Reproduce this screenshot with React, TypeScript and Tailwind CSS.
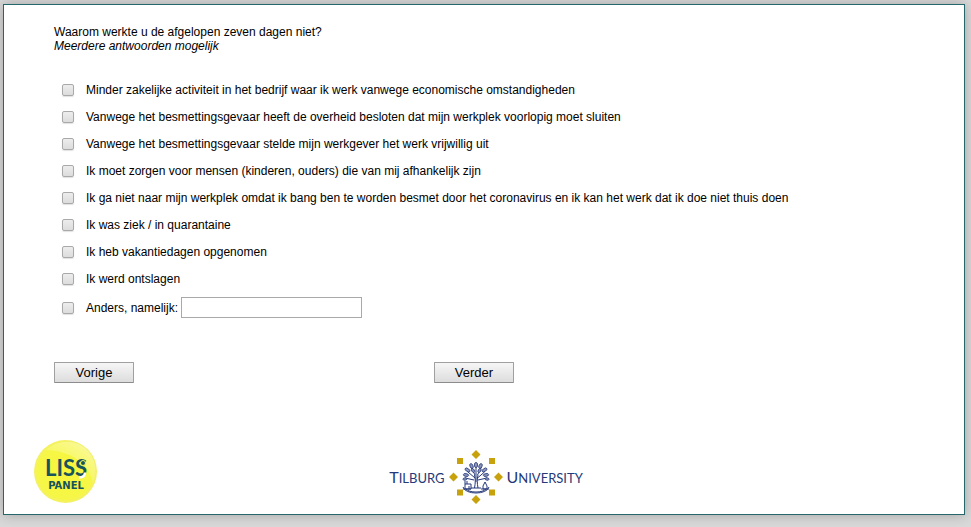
import React from "react";

const reasons: string[] = [
  "Minder zakelijke activiteit in het bedrijf waar ik werk vanwege economische omstandigheden",
  "Vanwege het besmettingsgevaar heeft de overheid besloten dat mijn werkplek voorlopig moet sluiten",
  "Vanwege het besmettingsgevaar stelde mijn werkgever het werk vrijwillig uit",
  "Ik moet zorgen voor mensen (kinderen, ouders) die van mij afhankelijk zijn",
  "Ik ga niet naar mijn werkplek omdat ik bang ben te worden besmet door het coronavirus en ik kan het werk dat ik doe niet thuis doen",
  "Ik was ziek / in quarantaine",
  "Ik heb vakantiedagen opgenomen",
  "Ik werd ontslagen",
];

function Checkbox({ id }: { id: string }) {
  return (
    <input
      id={id}
      type="checkbox"
      className="size-3 shrink-0 appearance-none rounded-[2px] border border-[#a9a9a9] bg-linear-to-b from-[#ededed] to-[#dcdcdc] shadow-[0_1px_1px_rgba(0,0,0,0.12)] checked:from-[#777] checked:to-[#555]"
    />
  );
}

function NavButton({ children }: { children: React.ReactNode }) {
  return (
    <button
      type="button"
      className="h-[21px] w-20 rounded-[1px] border border-[#a0a0a0] border-b-[#8c8c8c] bg-linear-to-b from-[#f6f6f6] to-[#dddddd] text-[13px] leading-[19px] text-black"
    >
      {children}
    </button>
  );
}

function LissLogo() {
  return (
    <svg viewBox="0 0 64 64" className="size-16" role="img" aria-label="LISS Panel">
      <defs>
        <radialGradient id="ball" cx="0.5" cy="0.5" r="0.5">
          <stop offset="0" stopColor="#f7f73a" />
          <stop offset="0.88" stopColor="#f6f648" />
          <stop offset="1" stopColor="#f3f06a" />
        </radialGradient>
        <linearGradient id="shine" x1="0.9" y1="0" x2="0.3" y2="0.8">
          <stop offset="0" stopColor="#fff" stopOpacity="0.45" />
          <stop offset="1" stopColor="#fff" stopOpacity="0.05" />
        </linearGradient>
      </defs>
      <circle cx="31.5" cy="31.5" r="31.5" fill="url(#ball)" />
      <path d="M12 10C24 -1 42 -1 53 10C61 18 64 30 59 43C55 24 38 11 12 10Z" fill="url(#shine)" />
      <text
        x="32"
        y="36"
        textAnchor="middle"
        className="font-['Lato',sans-serif] text-[22px] font-bold"
        fill="#17545c"
      >
        LISS
      </text>
      <circle cx="49" cy="23" r="2.500" fill="#17545c" stroke="#f7f75a" strokeWidth="1" />
      <path d="M45 37.500c4 0 6-2 6-5" fill="none" stroke="#fff" strokeWidth="2.500" />
      <text
        x="32"
        y="49"
        textAnchor="middle"
        className="font-['DejaVu_Sans',sans-serif] text-[10px] font-bold"
        fill="#17545c"
      >
        PANEL
      </text>
    </svg>
  );
}

function Emblem() {
  return (
    <svg viewBox="0 0 54 54" className="size-[54px]" aria-hidden="true">
      <g fill="#c8a20c">
        <path d="M27 0l4.500 4.500l-4.500 4.500l-4.500-4.500zM27 45l4.500 4.500l-4.500 4.500l-4.500-4.500zM4.500 22.500l4.500 4.500l-4.500 4.500l-4.500-4.500zM49.500 22.500l4.500 4.500l-4.500 4.500l-4.500-4.500z" />
        <path d="M8 8h6v6H8zM40 8h6v6h-6zM8 39.500h6v6H8zM40 39.500h6v6h-6z" />
      </g>
      <g fill="none" stroke="#26397a" strokeWidth="1">
        <path d="M25.500 38c1-5 1-9 0-13M29 38c-1-5-1-9 0-13M27 32V15M26 28l-7-6M28.500 28l7-6M26 25l-4-8M28.500 25l4-8M25 30l-9-2M29 30l9-2M22 38h10" />
        <path d="M16 31v8h6v-5h-6M18 31v3M20 36v3M34 39v-3l2-4l2 4v3zM32 39h8M14 39h8" />
        <path d="M14 37c2 8 24 8 26 0M17 39c3 4 17 4 20 0" />
      </g>
      <g fill="#8d98bd" stroke="#26397a" strokeWidth="0.8">
        <ellipse cx="27" cy="15" rx="1.600" ry="2.600" />
        <ellipse cx="22.500" cy="16" rx="1.500" ry="2.500" transform="rotate(-25 22.500 16)" />
        <ellipse cx="31.500" cy="16" rx="1.500" ry="2.500" transform="rotate(25 31.500 16)" />
        <ellipse cx="18.500" cy="20" rx="1.500" ry="2.700" transform="rotate(-55 18.500 20)" />
        <ellipse cx="35.500" cy="20" rx="1.500" ry="2.700" transform="rotate(55 35.500 20)" />
        <ellipse cx="24" cy="20.500" rx="1.300" ry="2.200" transform="rotate(-30 24 20.500)" />
        <ellipse cx="30.500" cy="20.500" rx="1.300" ry="2.200" transform="rotate(30 30.500 20.500)" />
        <ellipse cx="17" cy="25" rx="1.400" ry="2.700" transform="rotate(-80 17 25)" />
        <ellipse cx="37" cy="25" rx="1.400" ry="2.700" transform="rotate(80 37 25)" />
        <ellipse cx="16" cy="29" rx="1.200" ry="2" transform="rotate(-100 16 29)" />
        <ellipse cx="38" cy="29" rx="1.200" ry="2" transform="rotate(100 38 29)" />
      </g>
    </svg>
  );
}

function TilburgLogo() {
  return (
    <div className="flex items-center gap-1 font-['Lato',sans-serif] text-base text-[#26397a]">
      <span>
        T<span className="text-[13px]">ILBURG</span>
      </span>
      <Emblem />
      <span>
        U<span className="text-[13px]">NIVERSITY</span>
      </span>
    </div>
  );
}

export default function App() {
  return (
    <div className="min-h-screen bg-[#d9d9d9] pt-1 pr-1.5 pb-3 pl-[3px] font-['Liberation_Sans',Arial,sans-serif] text-xs leading-[14px] text-black">
      <main className="border border-[#24686c] bg-white pt-5 pb-2.5 shadow-[0_0_12px_rgba(0,0,0,0.25)]">
        <form className="pl-[50px]" onSubmit={(e) => e.preventDefault()}>
          <fieldset>
            <legend>
              Waarom werkte u de afgelopen zeven dagen niet?
              <br />
              <em>Meerdere antwoorden mogelijk</em>
            </legend>
            <ul className="pt-[23px] pl-2">
              {reasons.map((reason, i) => (
                <li key={reason} className="flex h-[27px] items-center gap-3">
                  <Checkbox id={`reden-${i}`} />
                  <label htmlFor={`reden-${i}`}>{reason}</label>
                </li>
              ))}
              <li className="flex h-[31px] items-center gap-3">
                <Checkbox id="reden-anders" />
                <div className="flex items-center gap-[3px]">
                  <label htmlFor="reden-anders">Anders, namelijk:</label>
                  <input
                    type="text"
                    aria-label="Anders, namelijk"
                    className="h-[21px] w-[181px] border border-[#a9a9a9] bg-white px-1 text-xs"
                  />
                </div>
              </li>
            </ul>
          </fieldset>
          <div className="flex gap-[300px] pt-[39px]">
            <NavButton>Vorige</NavButton>
            <NavButton>Verder</NavButton>
          </div>
        </form>
        <footer className="grid grid-cols-[1fr_auto_1fr] items-end pt-[57px] pr-[26px] pl-[30px]">
          <LissLogo />
          <TilburgLogo />
        </footer>
      </main>
    </div>
  );
}
